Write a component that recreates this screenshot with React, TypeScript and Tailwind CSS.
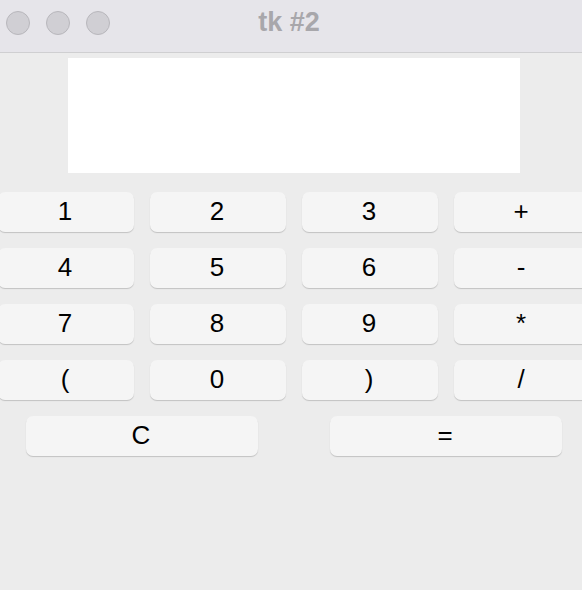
const rows = [
  ['1', '2', '3', '+'],
  ['4', '5', '6', '-'],
  ['7', '8', '9', '*'],
  ['(', '0', ')', '/'],
];

function Key({ label, wide }: { label: string; wide?: boolean }) {
  return (
    <button
      className={
        (wide ? 'w-[232px] ' : 'w-[136px] ') +
        'h-[40px] shrink-0 rounded-[7px] bg-[#f5f5f5] text-[26px] leading-none text-black shadow-[0_1px_1px_rgba(0,0,0,0.18)] flex items-center justify-center pr-[2px] pb-[2px]'
      }
      style={{ fontFamily: 'Helvetica, "Liberation Sans", Arial, sans-serif' }}
    >
      {label}
    </button>
  );
}

export default function App() {
  return (
    <div className="w-[582px] h-[590px] overflow-hidden bg-[#ececec] flex flex-col">
      <div className="h-[53px] shrink-0 bg-[#e6e5ea] border-b border-[#cfcfd1] relative">
        <div className="flex gap-4 pl-[6px] pt-[11px]">
          <span className="w-6 h-6 rounded-full bg-[#d0cfd4] border border-[#b8b7bc]" />
          <span className="w-6 h-6 rounded-full bg-[#d0cfd4] border border-[#b8b7bc]" />
          <span className="w-6 h-6 rounded-full bg-[#d0cfd4] border border-[#b8b7bc]" />
        </div>
        <div
          className="absolute left-0 right-0 top-[6px] h-8 flex items-center justify-center pr-[4px] text-[27px] font-bold text-[#a8a7ab]"
          style={{ fontFamily: 'Helvetica, "Liberation Sans", Arial, sans-serif' }}
        >
          tk #2
        </div>
      </div>
      <div className="pt-[5px] pl-[68px]">
        <div className="w-[452px] h-[115px] bg-white" />
      </div>
      <div className="mt-[19px] -ml-[2px] w-[592px] flex flex-col gap-4">
        {rows.map((r, i) => (
          <div key={i} className="flex gap-4">
            {r.map((k) => (
              <Key key={k} label={k} />
            ))}
          </div>
        ))}
        <div className="flex gap-[72px] pl-[28px]">
          <Key label="C" wide />
          <Key label="=" wide />
        </div>
      </div>
    </div>
  );
}
